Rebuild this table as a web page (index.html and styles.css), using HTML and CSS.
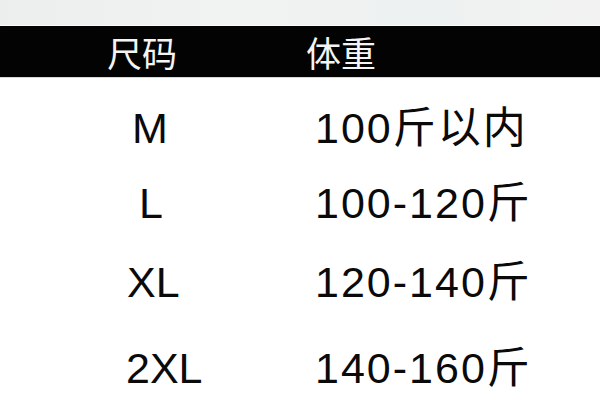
FILE: index.html
```html
<!DOCTYPE html>
<html lang="zh">
<head>
<meta charset="utf-8">
<title>尺码表</title>
<link rel="stylesheet" href="styles.css">
</head>
<body>
<div class="page">
  <div class="top-strip"></div>
  <div class="head">
    <div class="hcell h-size">尺码</div>
    <div class="hcell h-weight">体重</div>
  </div>
  <div class="rows">
    <div class="row r1"><div class="size s-m">M</div><div class="weight">100斤以内</div></div>
    <div class="row r2"><div class="size s-l">L</div><div class="weight">100-120斤</div></div>
    <div class="row r3"><div class="size s-xl">XL</div><div class="weight">120-140斤</div></div>
    <div class="row r4"><div class="size s-2xl">2XL</div><div class="weight">140-160斤</div></div>
  </div>
</div>
</body>
</html>
```

FILE: styles.css
```css
html, body {
  margin: 0;
  padding: 0;
  background: #ffffff;
}
.page {
  width: 600px;
  height: 400px;
  overflow: hidden;
  font-family: "Liberation Sans", "Noto Sans CJK SC", sans-serif;
  color: #0a0a0a;
}
.top-strip {
  height: 25px;
  background: linear-gradient(90deg, #eceeee 0%, #f1f2f2 40%, #eef1f1 70%, #f2f2f2 100%);
  border-bottom: 1px solid #fbfbfb;
}
.head {
  height: 51px;
  background: #030303;
  display: flex;
  align-items: center;
  color: #f4f4f4;
  font-family: "Noto Sans CJK SC", sans-serif;
  font-size: 35px;
  line-height: 1;
  border-bottom: 1px solid #d8d8d8;
}
.h-size { margin-left: 107px; width: 199px; }
.rows {
  display: flex;
  flex-direction: column;
}
.row {
  display: grid;
  grid-template-columns: 315px 1fr;
  font-size: 43px;
  line-height: 40px;
  height: 40px;
}
.weight { letter-spacing: 2px; }
.r1 { margin-top: 30px; }
.r2 { margin-top: 35px; }
.r3 { margin-top: 39px; }
.r4 { margin-top: 46px; }
.s-m { padding-left: 132px; }
.s-l { padding-left: 139px; }
.s-xl { padding-left: 127px; }
.s-2xl { padding-left: 126px; }
```
